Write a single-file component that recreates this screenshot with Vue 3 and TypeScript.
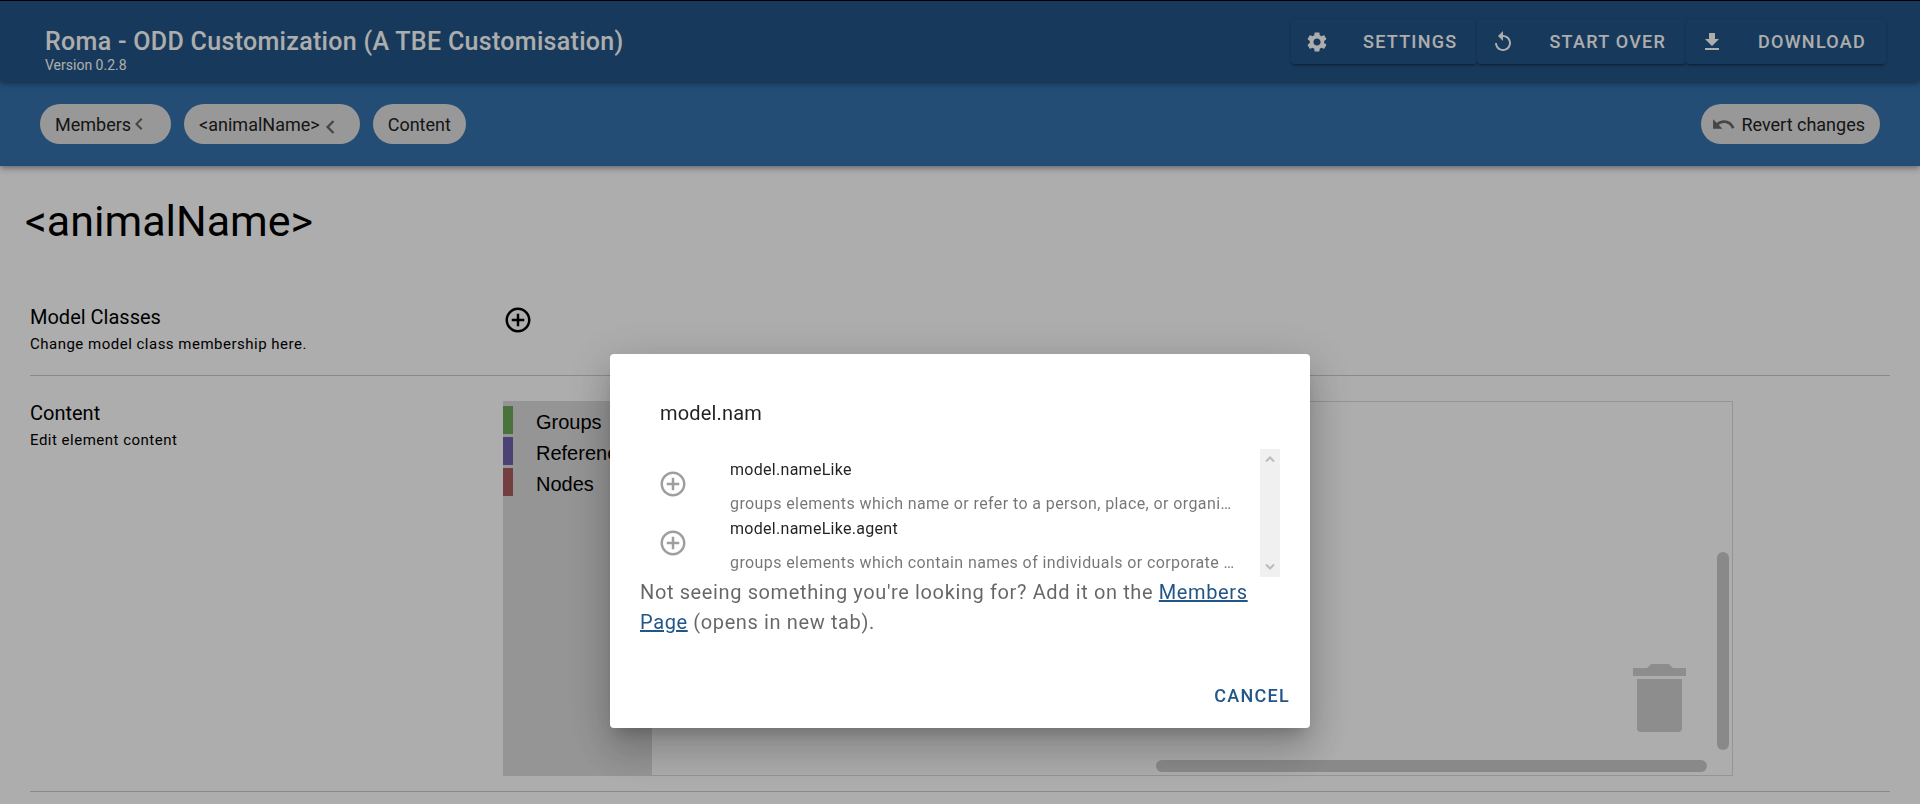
<script setup lang="ts">
import { ref } from 'vue'

interface Action { label: string; icon: string }
interface Crumb { label: string; arrow: '' | 'small' | 'large' }
interface ModelClass { name: string; desc: string }

const actions: Action[] = [
  {
    label: 'Settings',
    icon: 'M19.14 12.94c.04-.3.06-.61.06-.94 0-.32-.02-.64-.07-.94l2.03-1.58c.18-.14.23-.41.12-.61l-1.92-3.32c-.12-.22-.37-.29-.59-.22l-2.39.96c-.5-.38-1.03-.7-1.62-.94l-.36-2.54c-.04-.24-.24-.41-.48-.41h-3.84c-.24 0-.43.17-.47.41l-.36 2.54c-.59.24-1.13.57-1.62.94l-2.39-.96c-.22-.08-.47 0-.59.22L2.74 8.87c-.12.21-.08.47.12.61l2.03 1.58c-.05.3-.09.63-.09.94s.02.64.07.94l-2.03 1.58c-.18.14-.23.41-.12.61l1.92 3.32c.12.22.37.29.59.22l2.39-.96c.5.38 1.03.7 1.62.94l.36 2.54c.05.24.24.41.48.41h3.84c.24 0 .44-.17.47-.41l.36-2.54c.59-.24 1.13-.56 1.62-.94l2.39.96c.22.08.47 0 .59-.22l1.92-3.32c.12-.22.07-.47-.12-.61l-2.01-1.58zM12 15.6c-1.98 0-3.6-1.62-3.6-3.6s1.62-3.6 3.6-3.6 3.6 1.62 3.6 3.6-1.62 3.6-3.6 3.6z',
  },
  {
    label: 'Start over',
    icon: 'M12 5V1L7 6l5 5V7c3.31 0 6 2.69 6 6s-2.69 6-6 6-6-2.69-6-6H4c0 4.42 3.58 8 8 8s8-3.58 8-8-3.58-8-8-8z',
  },
  { label: 'Download', icon: 'M19 9h-4V3H9v6H5l7 7 7-7zM5 18v2h14v-2H5z' },
]

const crumbs: Crumb[] = [
  { label: 'Members', arrow: 'small' },
  { label: '<animalName>', arrow: 'large' },
  { label: 'Content', arrow: '' },
]

const palette = [
  { label: 'Groups', tone: 'green' },
  { label: 'References', tone: 'purple' },
  { label: 'Nodes', tone: 'red' },
]

const results: ModelClass[] = [
  { name: 'model.nameLike', desc: 'groups elements which name or refer to a person, place, or organization.' },
  { name: 'model.nameLike.agent', desc: 'groups elements which contain names of individuals or corporate bodies.' },
]

const addIcon = 'M13 7h-2v4H7v2h4v4h2v-4h4v-2h-4V7zm-1-5C6.48 2 2 6.48 2 12s4.48 10 10 10 10-4.48 10-10S17.52 2 12 2zm0 18c-4.41 0-8-3.59-8-8s3.59-8 8-8 8 3.59 8 8-3.59 8-8 8z'
const query = ref('model.nam')
</script>

<template>
  <div class="app">
    <header class="topbar">
      <div class="brand">
        <div class="title">Roma - ODD Customization (A TBE Customisation)</div>
        <div class="version">Version 0.2.8</div>
      </div>
      <div class="actions">
        <button v-for="a in actions" :key="a.label" type="button" class="action">
          <svg viewBox="0 0 24 24" aria-hidden="true"><path :d="a.icon" /></svg>
          <span>{{ a.label }}</span>
        </button>
      </div>
    </header>

    <nav class="crumbs">
      <a v-for="c in crumbs" :key="c.label" href="#" class="chip">
        <span>{{ c.label }}</span>
        <svg v-if="c.arrow" :class="['arrow', c.arrow]" viewBox="8 6 8 12" aria-hidden="true">
          <path d="M15.41 7.41 14 6l-6 6 6 6 1.41-1.41L10.83 12z" />
        </svg>
      </a>
      <button type="button" class="chip revert">
        <svg viewBox="0 0 24 24" aria-hidden="true">
          <path d="M12.5 8c-2.65 0-5.05.99-6.9 2.6L2 7v9h9l-3.62-3.62c1.39-1.16 3.16-1.88 5.12-1.88 3.54 0 6.55 2.31 7.6 5.5l2.37-.78C21.08 11.03 17.15 8 12.5 8z" />
        </svg>
        <span>Revert changes</span>
      </button>
    </nav>

    <main>
      <h1>&lt;animalName&gt;</h1>
      <section class="row classes">
        <div class="about">
          <h2>Model Classes</h2>
          <p>Change model class membership here.</p>
        </div>
        <button type="button" class="add" aria-label="Add model class">
          <svg viewBox="0 0 24 24" aria-hidden="true"><path :d="addIcon" /></svg>
        </button>
      </section>
      <section class="row content">
        <div class="about">
          <h2>Content</h2>
          <p>Edit element content</p>
        </div>
        <div class="workspace">
          <ul class="palette">
            <li v-for="p in palette" :key="p.label" :class="p.tone">{{ p.label }}</li>
          </ul>
          <div class="canvas">
            <svg class="trash" viewBox="0 0 54 70" aria-hidden="true">
              <path d="M0 5h14l4-4h18l4 4h13v8H0zM4 16h45v49a4 4 0 0 1-4 4H8a4 4 0 0 1-4-4z" />
            </svg>
            <div class="bar vertical"></div>
            <div class="bar horizontal"></div>
          </div>
        </div>
      </section>
    </main>

    <div class="scrim">
      <div class="dialog" role="dialog" aria-modal="true" aria-label="Add model class">
        <input v-model="query" type="text" aria-label="Search model classes" />
        <div class="list">
          <ul>
            <li v-for="r in results" :key="r.name">
              <button type="button" class="add" :aria-label="'Add ' + r.name">
                <svg viewBox="0 0 24 24" aria-hidden="true"><path :d="addIcon" /></svg>
              </button>
              <div class="entry">
                <div class="name">{{ r.name }}</div>
                <div class="desc">{{ r.desc }}</div>
              </div>
            </li>
          </ul>
          <div class="track" aria-hidden="true">
            <svg viewBox="0 0 10 8"><path d="M1 6.500 5 2.500 9 6.500" /></svg>
            <svg viewBox="0 0 10 8"><path d="M1 1.500 5 5.500 9 1.500" /></svg>
          </div>
        </div>
        <p class="hint">
          Not seeing something you're looking for? Add it on the <a href="#">Members Page</a> (opens in new tab).
        </p>
        <button type="button" class="cancel">Cancel</button>
      </div>
    </div>
  </div>
</template>

<style>
body {
  margin: 0;
  overflow: hidden;
}
</style>

<style scoped>
.app {
  box-sizing: border-box;
  min-height: 100vh;
  border-top: 1px solid #000;
  background: #fff;
  color: #000;
  font-family: Roboto, "Liberation Sans", sans-serif;
}
h1, h2, p, ul { margin: 0; padding: 0; font-weight: 400; list-style: none; }
button, input { font: inherit; border: 0; background: none; padding: 0; }
svg { display: block; fill: currentColor; }

.topbar {
  position: relative;
  z-index: 1;
  display: flex;
  align-items: flex-start;
  justify-content: space-between;
  box-sizing: border-box;
  height: 80px;
  padding: 18px 34px 0 45px;
  background: #235587;
  color: #fff;
  box-shadow: 0 2px 4px -1px rgba(0, 0, 0, 0.2), 0 4px 5px rgba(0, 0, 0, 0.14), 0 1px 10px rgba(0, 0, 0, 0.12);
}
.title { margin-top: 7px; font-size: 25px; line-height: 32px; font-weight: 500; letter-spacing: 0.0125em; }
.version { font-size: 14px; line-height: 14px; }
.actions { display: flex; }
.action {
  display: flex;
  align-items: center;
  gap: 34px;
  height: 45px;
  padding: 0 20px 0 14px;
  border-radius: 4px;
  background: #235587;
  color: #fff;
  font-size: 18px;
  font-weight: 500;
  letter-spacing: 0.07em;
  text-transform: uppercase;
  box-shadow: 0 3px 1px -2px rgba(0, 0, 0, 0.2), 0 2px 2px rgba(0, 0, 0, 0.14), 0 1px 5px rgba(0, 0, 0, 0.12);
}
.action svg { width: 24px; height: 24px; }

.crumbs {
  display: flex;
  align-items: center;
  gap: 13px;
  height: 85px;
  padding: 0 40px;
  background: #3472ad;
  box-shadow: 0 2px 4px -1px rgba(0, 0, 0, 0.2), 0 4px 5px rgba(0, 0, 0, 0.14), 0 1px 10px rgba(0, 0, 0, 0.12);
}
.chip {
  display: flex;
  align-items: center;
  box-sizing: border-box;
  height: 40px;
  padding: 1px 15px 0;
  border-radius: 20px;
  background: #e0e0e0;
  color: #212121;
  font-size: 18px;
  text-decoration: none;
}
.arrow { color: #666; }
.arrow.small { width: 8px; height: 12px; margin: 0 13px 0 4px; }
.arrow.large { width: 9px; height: 14px; margin: 5px 10px 0 6px; }
.revert { margin-left: auto; padding-left: 10px; gap: 5px; }
.revert svg { width: 25px; height: 25px; color: #666; }

h1 { padding: 27px 25px 0; font-size: 43px; line-height: 56px; }
.row { display: flex; margin: 0 30px; border-bottom: 1px solid #ccc; }
.about { flex: none; width: 473px; }
.about h2 { font-size: 20px; line-height: 30px; }
.about p { font-size: 15px; line-height: 24px; letter-spacing: 0.033em; }
.add svg { width: 30px; height: 30px; }
.classes { height: 73px; padding-top: 53px; }
.classes .add { align-self: flex-start; margin-top: 3px; color: #000; }
.content { height: 393px; padding-top: 22px; }

.workspace { display: flex; flex: none; width: min(1230px, calc(100% - 473px)); height: 375px; margin-top: 3px; }
.palette { box-sizing: border-box; width: 149px; padding-top: 5px; background: #dcdcdc; font: 20px/28px "Liberation Sans", Arial, sans-serif; }
.palette li { height: 28px; margin-bottom: 3px; padding-left: 23px; border-left: 10px solid; border-left-color: var(--tone); line-height: 32px; }
.green { --tone: #6da85a; }
.purple { --tone: #7160ab; }
.red { --tone: #a85c5e; }
.canvas { position: relative; flex: 1; border: 1px solid #dadada; border-left: 0; }
.trash { position: absolute; right: 45px; bottom: 42px; width: 54px; height: 70px; fill: #d0d0d0; }
.bar { position: absolute; border-radius: 6px; background: #cbcbcb; }
.vertical { top: 150px; bottom: 25px; right: 3px; width: 12px; }
.horizontal { left: 504px; right: 25px; bottom: 3px; height: 12px; }

.scrim {
  position: fixed;
  inset: 0;
  z-index: 2;
  display: flex;
  justify-content: center;
  align-items: flex-start;
  padding-top: 354px;
  background: rgba(0, 0, 0, 0.32);
}
.dialog {
  display: flex;
  flex-direction: column;
  box-sizing: border-box;
  width: 700px;
  padding: 39px 30px 10px;
  border-radius: 4px;
  background: #fff;
  box-shadow: 0 11px 15px -7px rgba(0, 0, 0, 0.2), 0 24px 38px 3px rgba(0, 0, 0, 0.14), 0 9px 46px 8px rgba(0, 0, 0, 0.12);
}
.dialog input { height: 40px; margin: 0 20px 16px; color: rgba(0, 0, 0, 0.87); font-size: 20px; letter-spacing: 0.009em; outline: 0; }
.list { display: flex; height: 128px; }
.list ul { flex: 1; min-width: 0; padding-top: 9px; }
.list li { display: flex; align-items: flex-start; height: 59px; padding: 0 24px 0 18px; }
.list .add { flex: none; margin: 11px 42px 0 0; color: rgba(0, 0, 0, 0.38); }
.entry { min-width: 0; font-size: 16px; line-height: 24px; }
.name { color: rgba(0, 0, 0, 0.87); letter-spacing: 0.018em; }
.desc { overflow: hidden; margin-top: 10px; color: rgba(0, 0, 0, 0.54); letter-spacing: 0.025em; text-overflow: ellipsis; white-space: nowrap; }
.track { display: flex; flex-direction: column; justify-content: space-between; align-items: center; box-sizing: border-box; width: 20px; padding: 6px 0; background: #f0f0f0; }
.track svg { width: 10px; height: 8px; fill: none; stroke: #bcbcbc; stroke-width: 2; }
.hint { color: rgba(0, 0, 0, 0.6); font-size: 20px; line-height: 30px; letter-spacing: 0.031em; }
.hint a { color: #225588; }
.cancel { align-self: flex-end; height: 45px; margin: 36px -20px 0 0; padding: 0 10px; color: #225588; font-size: 18px; font-weight: 500; letter-spacing: 0.07em; text-transform: uppercase; }
</style>
